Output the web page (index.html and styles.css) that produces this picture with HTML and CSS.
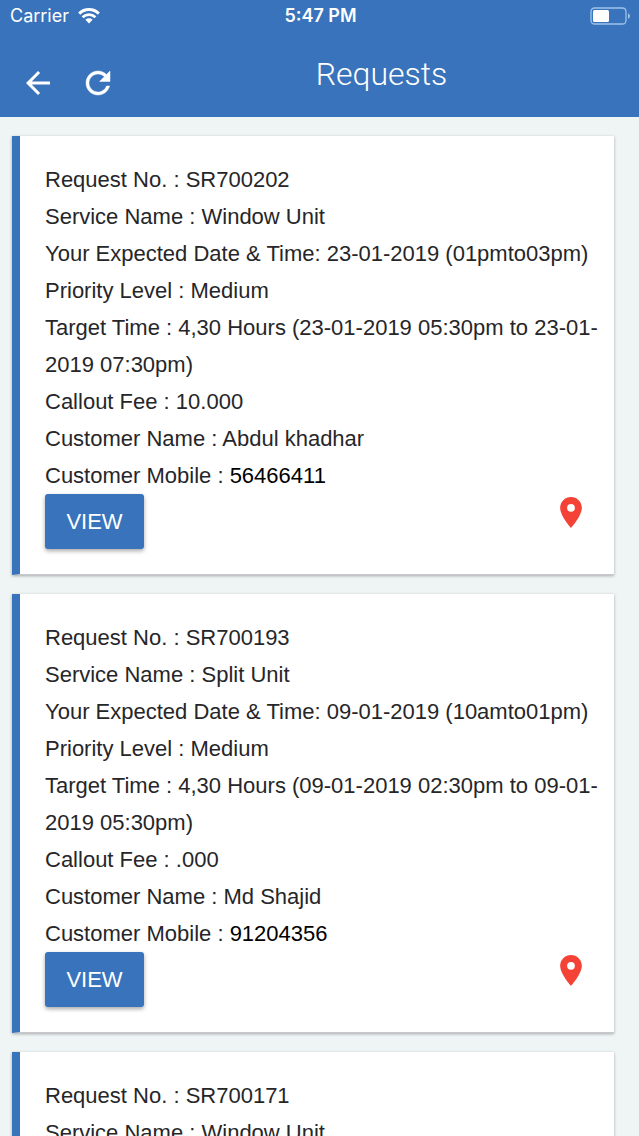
FILE: index.html
```html
<!DOCTYPE html>
<html lang="en">
<head>
<meta charset="utf-8">
<meta name="viewport" content="width=device-width, initial-scale=1">
<title>Requests</title>
<link rel="stylesheet" href="styles.css">
</head>
<body>
<div class="app">
  <header class="header">
    <div class="status">
      <div class="status-left">
        <span>Carrier</span>
        <svg class="wifi" viewBox="0 0 22 16" aria-hidden="true">
          <path d="M1.200 5.600a14 14 0 0 1 19.600 0" fill="none" stroke="currentColor" stroke-width="3"/>
          <path d="M4.600 9.300a9.200 9.200 0 0 1 12.800 0" fill="none" stroke="currentColor" stroke-width="2.800"/>
          <path d="M11 15.400 7.400 11.800a5.200 5.200 0 0 1 7.200 0z" fill="currentColor"/>
        </svg>
      </div>
      <span class="status-time">5:47 PM</span>
      <svg class="battery" viewBox="0 0 42 18" aria-hidden="true">
        <rect x="2" y="1" width="35" height="16" rx="3.500" fill="none" stroke="#9fc3ea" stroke-width="1.300"/>
        <rect x="4" y="3" width="16" height="12" rx="1.500" fill="#fff"/>
        <path d="M39 6.200c2.600 1.200 2.600 4.400 0 5.600z" fill="#9fc3ea"/>
      </svg>
    </div>
    <div class="toolbar">
      <div class="actions">
        <button class="icon-button" type="button" aria-label="Back">
          <svg viewBox="0 0 24 24"><path d="M20 11H7.830l5.590-5.590L12 4l-8 8 8 8 1.410-1.410L7.830 13H20v-2z" fill="currentColor"/></svg>
        </button>
        <button class="icon-button" type="button" aria-label="Refresh">
          <svg viewBox="0 0 24 24"><path d="M17.650 6.350C16.200 4.900 14.210 4 12 4c-4.420 0-7.990 3.580-7.990 8s3.570 8 7.990 8c3.730 0 6.840-2.550 7.730-6h-2.080c-.82 2.330-3.040 4-5.650 4-3.310 0-6-2.690-6-6s2.690-6 6-6c1.660 0 3.140.69 4.220 1.780L13 11h7V4l-2.350 2.350z" fill="currentColor" stroke="currentColor" stroke-width=".3"/></svg>
        </button>
      </div>
      <h1 class="title">Requests</h1>
    </div>
  </header>
  <main class="list">
    <article class="card">
      <p>Request No. : SR700202</p>
      <p>Service Name : Window Unit</p>
      <p>Your Expected Date &amp; Time: 23-01-2019 (01pmto03pm)</p>
      <p>Priority Level : Medium</p>
      <p>Target Time : 4,30 Hours (23-01-2019 05:30pm to 23-01-2019 07:30pm)</p>
      <p>Callout Fee : 10.000</p>
      <p>Customer Name : Abdul khadhar</p>
      <p>Customer Mobile : <a class="phone" href="tel:56466411">56466411</a></p>
      <div class="card-actions">
        <button class="view" type="button">VIEW</button>
        <button class="pin" type="button" aria-label="Show location"><svg viewBox="5 2 14 20"><path d="M12 2C8.130 2 5 5.130 5 9c0 5.250 7 13 7 13s7-7.750 7-13c0-3.870-3.130-7-7-7zm0 9.500a2.500 2.500 0 0 1 0-5 2.500 2.500 0 0 1 0 5z" fill="currentColor"/></svg></button>
      </div>
    </article>
    <article class="card">
      <p>Request No. : SR700193</p>
      <p>Service Name : Split Unit</p>
      <p>Your Expected Date &amp; Time: 09-01-2019 (10amto01pm)</p>
      <p>Priority Level : Medium</p>
      <p>Target Time : 4,30 Hours (09-01-2019 02:30pm to 09-01-2019 05:30pm)</p>
      <p>Callout Fee : .000</p>
      <p>Customer Name : Md Shajid</p>
      <p>Customer Mobile : <a class="phone" href="tel:91204356">91204356</a></p>
      <div class="card-actions">
        <button class="view" type="button">VIEW</button>
        <button class="pin" type="button" aria-label="Show location"><svg viewBox="5 2 14 20"><path d="M12 2C8.130 2 5 5.130 5 9c0 5.250 7 13 7 13s7-7.750 7-13c0-3.870-3.130-7-7-7zm0 9.500a2.500 2.500 0 0 1 0-5 2.500 2.500 0 0 1 0 5z" fill="currentColor"/></svg></button>
      </div>
    </article>
    <article class="card">
      <p>Request No. : SR700171</p>
      <p>Service Name : Window Unit</p>
    </article>
  </main>
</div>
</body>
</html>
```

FILE: styles.css
```css
* {
  box-sizing: border-box;
}

body {
  margin: 0;
  background: #eff4f5;
  color: #262629;
  font-family: "Liberation Sans", Arial, sans-serif;
  font-size: 22px;
  line-height: 37px;
}

button {
  margin: 0;
  padding: 0;
  border: 0;
  background: none;
  color: inherit;
  font: inherit;
  cursor: pointer;
}

svg {
  display: block;
}

.app {
  display: flex;
  flex-direction: column;
  height: 100vh;
}

.header {
  flex: none;
  background: #3973bb;
  color: #fff;
}

.status {
  display: grid;
  grid-template-columns: 1fr auto 1fr;
  align-items: center;
  height: 32px;
  padding: 0 8px 0 10px;
  font-family: Inter, "Liberation Sans", sans-serif;
  font-size: 18px;
  line-height: 32px;
}

.status-left {
  display: flex;
  align-items: center;
  gap: 9px;
}

.wifi {
  width: 22px;
  height: 16px;
}

.status-time {
  font-weight: 600;
}

.battery {
  justify-self: end;
  width: 42px;
  height: 18px;
}

.toolbar {
  display: flex;
  align-items: flex-start;
  height: 85px;
  padding: 24px 0 0 20px;
}

.actions {
  display: flex;
  gap: 24px;
  padding-top: 9px;
}

.icon-button,
.icon-button svg {
  width: 36px;
  height: 36px;
}

.title {
  flex: 1;
  margin: 0;
  padding-left: 8px;
  font-family: Roboto, "Liberation Sans", sans-serif;
  font-size: 32px;
  font-weight: 300;
  line-height: 37px;
  text-align: center;
}

.list {
  flex: 1;
  min-height: 0;
  padding: 19px 25px 19px 12px;
  overflow-y: auto;
  scrollbar-width: none;
}

.card {
  margin-bottom: 19px;
  padding: 25px 12px 25px 25px;
  border-bottom: 1px solid #c8c8cc;
  border-left: 8px solid #3973bb;
  background: #fff;
  box-shadow: 0 1px 3px rgba(0, 0, 0, .3);
}

.card p {
  margin: 0;
}

.phone {
  color: #000;
  text-decoration: none;
}

.card-actions {
  display: flex;
  justify-content: space-between;
  align-items: flex-start;
}

.view {
  width: 99px;
  height: 55px;
  border-radius: 3px;
  background: #3973bb;
  box-shadow: 0 2px 4px rgba(0, 0, 0, .35);
  color: #fff;
}

.pin {
  padding: 3px 20px;
  color: #f44336;
}

.pin svg {
  width: 22px;
  height: 31px;
}
```
